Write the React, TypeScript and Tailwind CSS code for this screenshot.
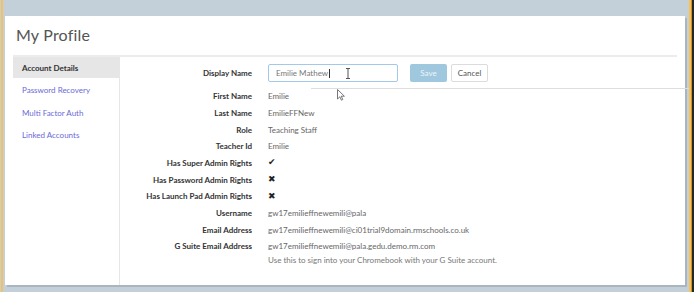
const rows: { label: string; value: React.ReactNode }[] = [
  { label: "First Name", value: "Emilie" },
  { label: "Last Name", value: "EmilieFFNew" },
  { label: "Role", value: "Teaching Staff" },
  { label: "Teacher Id", value: "Emilie" },
  { label: "Has Super Admin Rights", value: <Glyph ch="✔" /> },
  { label: "Has Password Admin Rights", value: <Glyph ch="✖" /> },
  { label: "Has Launch Pad Admin Rights", value: <Glyph ch="✖" /> },
  { label: "Username", value: "gw17emilieffnewemili@pala" },
  { label: "Email Address", value: "gw17emilieffnewemili@ci01trial9domain.rmschools.co.uk" },
  { label: "G Suite Email Address", value: "gw17emilieffnewemili@pala.gedu.demo.rm.com" },
];

function Glyph({ ch }: { ch: string }) {
  return <span className="text-[9px] text-[#222] font-['DejaVu_Sans',sans-serif]">{ch}</span>;
}

const links = ["Password Recovery", "Multi Factor Auth", "Linked Accounts"];

export default function App() {
  return (
    <div className="relative flex w-[694px] h-[292px] overflow-hidden bg-[#c4d0d9] font-['Lato',sans-serif]">
      {/* left window edge */}
      <div className="ml-[1px] w-[2px] bg-[#f4c15a]" />
      <div className="w-[2px]" />

      {/* panel + shadow */}
      <div className="flex flex-col pt-[16px]">
        <div className="flex">
          <div className="w-[680px] h-[269px] bg-white flex flex-col px-[8px]">
            <h1 className="ml-[3px] mt-[9px] text-[16px] leading-[20px] text-[#555] tracking-[0.2px]">My Profile</h1>
            <div className="mt-[10px] h-[2px] w-[664px] bg-[#ececec]" />

            <div className="flex flex-1">
              {/* sidebar */}
              <nav className="w-[107px] border-r border-[#e6e6e6] flex flex-col">
                <div className="h-[21px] bg-[#e6e6e6] flex items-center pl-[9px] text-[8px] font-bold text-[#333]">
                  Account Details
                </div>
                {links.map((l) => (
                  <div key={l} className="h-[22.7px] pt-[1px] flex items-center pl-[9px] text-[8px] text-[#6a6ad8]">
                    {l}
                  </div>
                ))}
              </nav>

              {/* details */}
              <div className="flex flex-col pt-[7px]">
                <div className="flex items-center h-[18px]">
                  <div className="w-[132px] text-right text-[8px] font-bold text-[#333]">Display Name</div>
                  <div className="ml-[16px] w-[130px] h-[18px] rounded-[2px] border border-[#a3c8e8] flex items-center pl-[7px] text-[8px] text-[#777]">
                    Emilie Mathew<span className="ml-[0.5px] w-[1px] h-[9px] bg-[#333]" />
                  </div>
                  <button className="ml-[12px] w-[37px] h-[18px] rounded-[2px] bg-[#9fc8df] text-[8px] text-[#eef4f8]">
                    Save
                  </button>
                  <button className="ml-[4px] w-[37px] h-[18px] rounded-[2px] border border-[#dcdcdc] bg-white text-[8px] text-[#555]">
                    Cancel
                  </button>
                </div>

                <div className="mt-[6px] flex flex-col">
                  {rows.map((r) => (
                    <div key={r.label} className="flex items-center h-[16.67px]">
                      <div className="w-[132px] text-right text-[8px] font-bold text-[#333]">{r.label}</div>
                      <div className="ml-[16px] text-[8px] text-[#666]">{r.value}</div>
                    </div>
                  ))}
                  <div className="ml-[148px] -mt-[1px] text-[8px] text-[#777]">
                    Use this to sign into your Chromebook with your G Suite account.
                  </div>
                </div>
              </div>
            </div>
          </div>
          <div className="w-[2px] mt-[2px] bg-[#aab5bd]" />
        </div>
        <div className="ml-[2px] h-[2px] w-[680px] bg-[#aab5bd]" />
      </div>

      {/* right window edge */}
      <div className="ml-[2px] w-[2px] bg-[#f4c15a]" />
      <div className="w-[1px] bg-[#d98c1e]" />
      <div className="w-[2px] bg-[#1f2a24]" />

      {/* overlay line + cursors */}
      <div className="absolute left-[311px] top-[88px] w-[378px] h-[1px] bg-[#dedede]" />
      <svg className="absolute left-[345px] top-[68px]" width="6" height="11" viewBox="0 0 6 11">
        <path d="M1 0.5h4M3 0.5v10M1 10.5h4" stroke="#555" strokeWidth="1" fill="none" />
      </svg>
      <svg className="absolute left-[337px] top-[89px]" width="8" height="12" viewBox="0 0 8 12">
        <path d="M0.5 0.5v9.5l2.3-2.2 1.6 3.4 1.4-0.7-1.6-3.3h3.2z" fill="#fff" stroke="#555" strokeWidth="0.8" />
      </svg>
    </div>
  );
}
